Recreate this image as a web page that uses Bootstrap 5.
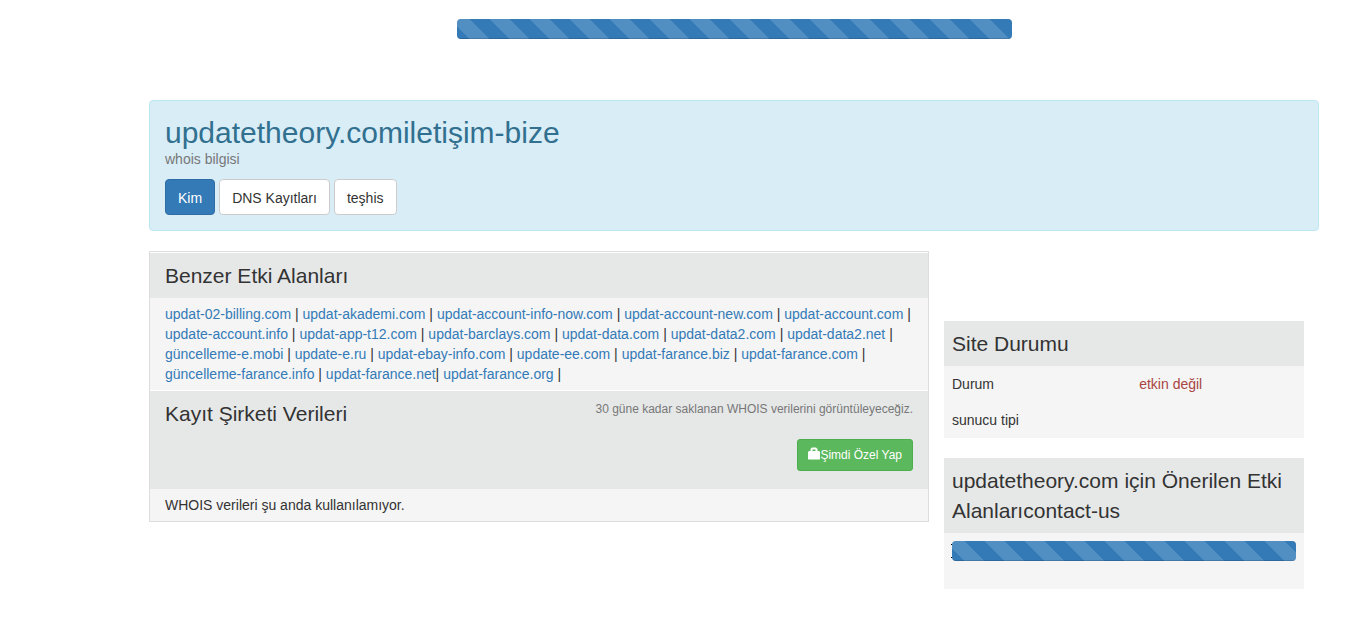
<!DOCTYPE html>
<html lang="tr">
<head>
<meta charset="utf-8">
<meta name="viewport" content="width=device-width, initial-scale=1">
<title>updatetheory.com whois bilgisi</title>
<link href="https://cdn.jsdelivr.net/npm/bootstrap@5.3.0/dist/css/bootstrap.min.css" rel="stylesheet">
<style>
  body { font-family: "Liberation Sans", Arial, sans-serif; font-size: 14px; line-height: 20px; color: #333; }
  a { color: #337ab7; text-decoration: none; }
  a:hover { text-decoration: underline; }
  .page { padding: 19px 37px 36px 149px; }
  .gutter { padding-left: 15px; padding-right: 15px; }

  .progress { height: 20px; border-radius: 4px; }
  .progress-bar { background-color: #337ab7; background-size: 40px 40px; background-position: 33px 0; box-shadow: inset 0 -1px 0 rgba(0,0,0,.15); }

  .domain-head { margin-top: 61px; margin-bottom: 20px; padding: 15px; background: #d9edf7; border: 1px solid #bce8f1; border-radius: 4px; color: #31708f; }
  .domain-head h1 { font-size: 30px; line-height: 33px; font-weight: 400; margin: 0; }
  .domain-head p { color: #777; margin: 0 0 10px; }
  .tabs { gap: 4px; }
  .tabs .btn { font-size: 14px; line-height: 20px; padding: 8px 12px 6px; border-radius: 4px; }
  .btn-on { background: #337ab7; border-color: #2e6da4; color: #fff; }
  .btn-off { background: #fff; border-color: #ccc; color: #333; }

  .whois { border: 1px solid #ddd; background: #fff; }
  .whois .head, .whois .text { padding-left: 15px; padding-right: 15px; }
  .head { background: #e6e8e8; padding: 8px 8px 7px; margin-top: 1px; }
  .head h2 { font-size: 21px; line-height: 30px; font-weight: 400; margin: 0; }
  .text { background: #f5f5f5; padding-top: 6px; padding-bottom: 6px; }
  .note { font-size: 12px; color: #777; margin: 0 0 20px; }
  .head-tall { padding-bottom: 18px; }
  .btn-private { background: #5cb85c; border-color: #4cae4c; color: #fff; font-size: 12px; line-height: 18px; padding: 6px 10px; border-radius: 3px; }
  .btn-private svg { margin-bottom: 2px; }

  .side { padding-top: 70px; }
  .side .head { margin-top: 0; }
  .side-body { background: #f5f5f5; }
  .side-body th, .side-body td { width: 48%; padding: 8px; font-weight: 400; text-align: left; }
  .side-body th { width: 52%; }
  .state-off { color: #a94442; }
  .suggest { padding: 8px 8px 28px; }
  .loader { position: relative; }
  .loader::before { content: ""; position: absolute; left: -1px; top: 3px; width: 1px; height: 14px; border: solid #000; border-width: 1px 0; }
</style>
</head>
<body>
<main class="page">
  <div class="row g-0 justify-content-center">
    <div class="col-6 gutter">
      <div class="progress" role="progressbar" aria-label="Yükleniyor">
        <div class="progress-bar progress-bar-striped w-100"></div>
      </div>
    </div>
  </div>

  <header class="domain-head">
    <h1>updatetheory.comiletişim-bize</h1>
    <p>whois bilgisi</p>
    <div class="tabs d-flex">
      <button type="button" class="btn btn-on">Kim</button>
      <button type="button" class="btn btn-off">DNS Kayıtları</button>
      <button type="button" class="btn btn-off">teşhis</button>
    </div>
  </header>

  <div class="row g-0 align-items-start">
    <section class="col-8 whois">
      <div class="head"><h2>Benzer Etki Alanları</h2></div>
      <div class="text">
        <a href="#">updat-02-billing.com</a> | <a href="#">updat-akademi.com</a> | <a href="#">updat-account-info-now.com</a> | <a href="#">updat-account-new.com</a> | <a href="#">updat-account.com</a> |
        <a href="#">update-account.info</a> | <a href="#">updat-app-t12.com</a> | <a href="#">updat-barclays.com</a> | <a href="#">updat-data.com</a> | <a href="#">updat-data2.com</a> | <a href="#">updat-data2.net</a> |
        <a href="#">güncelleme-e.mobi</a> | <a href="#">update-e.ru</a> | <a href="#">updat-ebay-info.com</a> | <a href="#">update-ee.com</a> | <a href="#">updat-farance.biz</a> | <a href="#">updat-farance.com</a> |
        <a href="#">güncelleme-farance.info</a> | <a href="#">updat-farance.net</a>| <a href="#">updat-farance.org</a> |
      </div>
      <div class="head head-tall d-flex justify-content-between">
        <h2>Kayıt Şirketi Verileri</h2>
        <div class="text-end">
          <p class="note">30 güne kadar saklanan WHOIS verilerini görüntüleyeceğiz.</p>
          <button type="button" class="btn btn-private d-inline-flex align-items-center"><svg width="12" height="14" viewBox="0 0 12 14" aria-hidden="true"><path fill="#fff" fill-rule="evenodd" d="M2.500 2L4 .5H8L9.500 2V4H11L12 5V12L11.500 12.500H.5L0 12V5L1 4H2.500ZM4.500 2.500V4H7.500V2.500Z"/></svg>Şimdi Özel Yap</button>
        </div>
      </div>
      <div class="text">WHOIS verileri şu anda kullanılamıyor.</div>
    </section>

    <aside class="col-4 gutter side">
      <section class="mb-3 pb-1">
        <div class="head"><h2>Site Durumu</h2></div>
        <table class="side-body w-100">
          <tbody>
            <tr><th scope="row">Durum</th><td class="state-off">etkin değil</td></tr>
            <tr><th scope="row">sunucu tipi</th><td></td></tr>
          </tbody>
        </table>
      </section>
      <section>
        <div class="head"><h2>updatetheory.com için Önerilen Etki Alanlarıcontact-us</h2></div>
        <div class="side-body suggest">
          <div class="loader">
            <div class="progress" role="progressbar" aria-label="Öneriler yükleniyor">
              <div class="progress-bar progress-bar-striped w-100"></div>
            </div>
          </div>
        </div>
      </section>
    </aside>
  </div>
</main>
<script src="https://cdn.jsdelivr.net/npm/bootstrap@5.3.0/dist/js/bootstrap.bundle.min.js"></script>
</body>
</html>
